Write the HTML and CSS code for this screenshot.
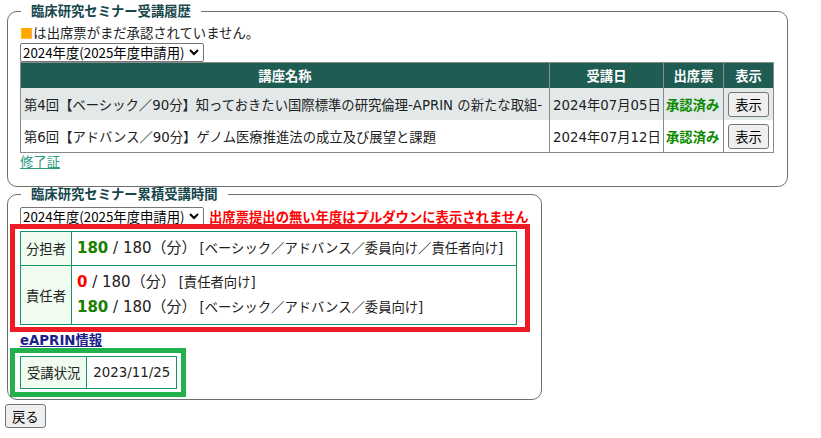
FILE: index.html
```html
<!DOCTYPE html>
<html lang="ja">
<head>
<meta charset="utf-8">
<title>受講履歴</title>
<link rel="stylesheet" href="styles.css">
</head>
<body>
<fieldset class="box box-history">
  <legend class="box-title">臨床研究セミナー受講履歴</legend>
  <div class="notice"><span class="mark">■</span>は出席票がまだ承認されていません。</div>
  <span class="sel sel-top">
    <select class="year-select"><option>2024年度(2025年度申請用)</option></select>
    <svg class="chev" width="10" height="7" viewBox="0 0 10 7"><polyline points="1,1 5,5 9,1" fill="none" stroke="#000" stroke-width="2"/></svg>
  </span>
  <table class="history">
    <colgroup><col class="c-name"><col class="c-date"><col class="c-status"><col class="c-view"></colgroup>
    <thead>
      <tr><th>講座名称</th><th>受講日</th><th>出席票</th><th>表示</th></tr>
    </thead>
    <tbody>
      <tr class="odd"><td class="name">第4回【ベーシック／90分】知っておきたい国際標準の研究倫理-APRIN の新たな取組-</td><td>2024年07月05日</td><td class="ok">承認済み</td><td class="view"><button class="btn">表示</button></td></tr>
      <tr><td class="name">第6回【アドバンス／90分】ゲノム医療推進法の成立及び展望と課題</td><td>2024年07月12日</td><td class="ok">承認済み</td><td class="view"><button class="btn">表示</button></td></tr>
    </tbody>
  </table>
  <a class="cert-link" href="#">修了証</a>
</fieldset>

<fieldset class="box box-total">
  <legend class="box-title">臨床研究セミナー累積受講時間</legend>
  <div class="select-row">
    <span class="sel">
      <select class="year-select"><option>2024年度(2025年度申請用)</option></select>
      <svg class="chev" width="10" height="7" viewBox="0 0 10 7"><polyline points="1,1 5,5 9,1" fill="none" stroke="#000" stroke-width="2"/></svg>
    </span>
    <span class="warn">出席票提出の無い年度はプルダウンに表示されません</span>
  </div>
  <div class="hl hl-red">
    <table class="sum">
      <tr class="r1">
        <th>分担者</th>
        <td><span class="num ok-num">180</span><span class="big"> / 180（分）</span><span class="cat">[ベーシック／アドバンス／委員向け／責任者向け]</span></td>
      </tr>
      <tr class="r2">
        <th>責任者</th>
        <td>
          <div><span class="num ng-num">0</span><span class="big"> / 180（分）</span><span class="cat">[責任者向け]</span></div>
          <div><span class="num ok-num">180</span><span class="big"> / 180（分）</span><span class="cat">[ベーシック／アドバンス／委員向け]</span></div>
        </td>
      </tr>
    </table>
  </div>
  <div class="eaprin"><a href="#">eAPRIN情報</a></div>
  <div class="hl hl-green">
    <table class="sum status">
      <tr><th>受講状況</th><td>2023/11/25</td></tr>
    </table>
  </div>
</fieldset>
<button class="btn back">戻る</button>
</body>
</html>
```

FILE: styles.css
```css
html, body {
  background: #fff;
}
body {
  margin: 4px 5px;
  font-family: "DejaVu Sans", "Noto Sans CJK JP", sans-serif;
  font-size: 13.33px;
  color: #222;
}
.box {
  box-sizing: border-box;
  margin: 0 2px;
  border: 1px solid #6e6e6e;
  border-radius: 10px;
  padding: 6px 12px 16px;
  min-width: 0;
}
.box-history { width: 781px; }
.box-total { width: 535px; padding-bottom: 10px; }
.box-title {
  margin-left: 1px;
  padding: 0 10px;
  line-height: 14px;
  font-weight: bold;
  color: #17474c;
  font-family: "Noto Sans CJK JP", sans-serif;
}
.notice {
  line-height: 17px;
  font-family: "Noto Sans CJK JP", sans-serif;
}
.mark {
  color: #ffa800;
}
.sel {
  position: relative;
  display: block;
  width: 184px;
  height: 19px;
}
.sel-top {
  margin-top: 2px;
}
.year-select {
  display: block;
  box-sizing: border-box;
  width: 184px;
  height: 19px;
  margin: 0;
  padding: 0 0 0 2px;
  -webkit-appearance: none;
  appearance: none;
  font-family: "Noto Sans CJK JP", sans-serif;
  font-size: 13.33px;
  line-height: 17px;
  color: #000;
  background: #fff;
  border: 1px solid #767676;
  border-radius: 2px;
}
.chev {
  position: absolute;
  right: 5px;
  top: 6px;
  pointer-events: none;
}
.history {
  width: 753px;
  table-layout: fixed;
  border-collapse: collapse;
  border: 1px solid #8a8a8a;
}
.c-name { width: 529px; }
.c-date { width: 114px; }
.c-status { width: 60px; }
.c-view { width: 50px; }
.history th {
  height: 25px;
  padding: 0;
  background: #1f5c54;
  color: #fff;
  font-weight: bold;
  text-align: center;
  border-left: 1px solid #8a8a8a;
  font-family: "Noto Sans CJK JP", sans-serif;
}
.history td {
  height: 32px;
  padding: 0 3px;
  white-space: nowrap;
  overflow: hidden;
  border-left: 1px solid #8a8a8a;
  border-right: 1px solid #8a8a8a;
}
.history .odd td { background: #e3e9e9; }
.history td.ok {
  color: #0a8a00;
  font-weight: bold;
  padding-left: 2px;
  font-family: "Noto Sans CJK JP", sans-serif;
}
.history td.view {
  text-align: center;
  padding: 0;
}
.btn {
  box-sizing: border-box;
  height: 25px;
  padding: 0 6px;
  font-family: "Noto Sans CJK JP", sans-serif;
  font-size: 13.33px;
  color: #000;
  background: #efefef;
  border: 1px solid #767676;
  border-radius: 3px;
}
.cert-link {
  display: inline-block;
  line-height: 17px;
  color: #2a9c82;
  font-family: "Noto Sans CJK JP", sans-serif;
}
.select-row {
  display: flex;
  align-items: center;
  gap: 5px;
  height: 19px;
}
.warn {
  color: #ff0000;
  font-weight: bold;
  font-family: "Noto Sans CJK JP", sans-serif;
}
.hl {
  position: relative;
  width: max-content;
}
.hl::after {
  content: "";
  position: absolute;
  pointer-events: none;
}
.hl-red { margin-top: 5px; }
.hl-red::after {
  left: -10px;
  right: -13px;
  top: -7px;
  bottom: -7px;
  border: 5px solid #ed1c24;
}
.hl-green { margin-top: 7px; }
.hl-green::after {
  left: -10px;
  right: -9px;
  top: -8px;
  bottom: -8px;
  border: 5px solid #22b14c;
}
.sum {
  border-collapse: collapse;
  border: 1px solid #14936a;
}
.sum th, .sum td {
  border: 1px solid #14936a;
}
.sum th {
  background: #effcef;
  font-weight: normal;
  padding: 0 5px;
  white-space: nowrap;
  font-family: "Noto Sans CJK JP", sans-serif;
}
.sum td {
  padding: 4px 6px 4px 5px;
  line-height: 24px;
  white-space: nowrap;
}
.sum .r1 td { width: 433px; }
.num {
  font-size: 15px;
  font-weight: bold;
}
.ok-num { color: #1a8000; }
.ng-num { color: #ff0000; }
.big { font-size: 15px; }
.cat { margin-left: 3px; }
.eaprin {
  margin-top: 7px;
  line-height: 17px;
}
.eaprin a {
  color: #1d2088;
  font-weight: bold;
}
.status th, .status td {
  height: 31px;
  padding-top: 0;
  padding-bottom: 0;
}
.status th { padding: 0 6px; }
.status td { padding: 0 6px; }
.back {
  display: block;
  margin-top: 4px;
  height: 24px;
}
```
